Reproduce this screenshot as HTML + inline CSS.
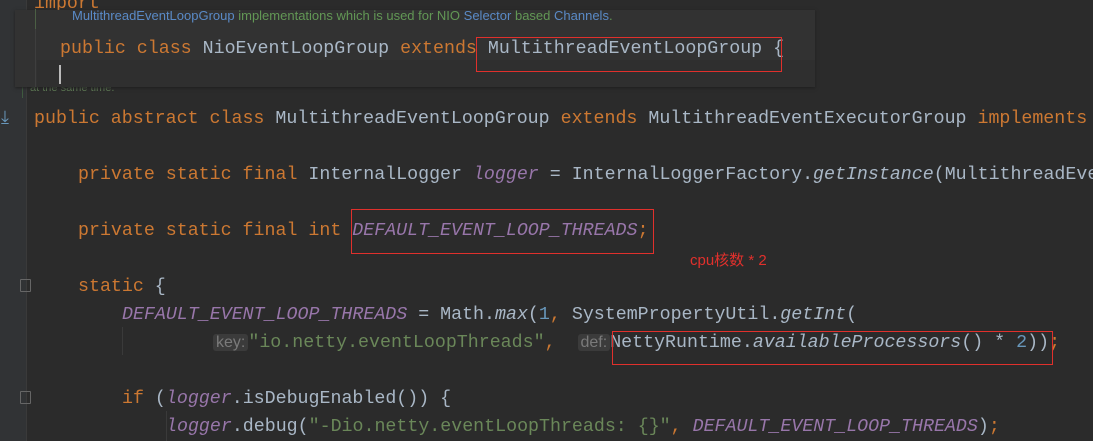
<!DOCTYPE html>
<html><head><meta charset="utf-8"><style>
body{margin:0;width:1093px;height:441px;background:#2b2b2b;overflow:hidden;position:relative;font-family:"Liberation Mono",monospace;}
.gut{position:absolute;left:0;top:0;width:26px;height:441px;background:#313335;border-right:1px solid #3a3a3a}
.l{position:absolute;font-size:18.3px;line-height:28px;white-space:pre;color:#a9b7c6}
.k{color:#cc7832}.f{color:#9876aa;font-style:italic}.i{font-style:italic}.s{color:#6a8759}.n{color:#6897bb}
.h{background:#3b3b3b;color:#7a7a7a;font-family:"Liberation Sans",sans-serif;font-size:16px;padding:0 3px;border-radius:3px}
.box{position:absolute;border:1px solid #e0302c}
.pop{position:absolute;left:15px;top:10px;width:800px;height:77px;background:#323232;box-shadow:0 1px 3px #1f1f1f}
.ig{position:absolute;width:1px;background:#3a3a3a}
</style></head><body>
<div class="gut"></div>
<div style="position:absolute;left:1px;top:107px;color:#6897bb;font-size:18px;font-family:'DejaVu Sans',sans-serif">⤓</div>
<div class="l k" style="left:34px;top:-10px">import</div>
<div style="position:absolute;left:30px;top:82px;font-family:'Liberation Sans',sans-serif;font-size:11px;color:#5f7a55">at the same time.</div>
<div class="ig" style="left:22px;top:80px;height:18px;background:#3f5a3f"></div>
<div class="l" style="left:34px;top:105px"><span class="k">public abstract class </span>MultithreadEventLoopGroup <span class="k">extends </span>MultithreadEventExecutorGroup <span class="k">implements</span></div>
<div class="l" style="left:78px;top:161px"><span class="k">private static final </span>InternalLogger <span class="f">logger</span> = InternalLoggerFactory.<span class="i">getInstance</span>(MultithreadEve</div>
<div class="l" style="left:78px;top:217px"><span class="k">private static final int </span><span class="f">DEFAULT_EVENT_LOOP_THREADS</span><span class="k">;</span></div>
<div class="l" style="left:78px;top:273px"><span class="k">static </span>{</div>
<div class="l" style="left:122px;top:301px"><span class="f">DEFAULT_EVENT_LOOP_THREADS</span> = Math.<span class="i">max</span>(<span class="n">1</span><span class="k">, </span>SystemPropertyUtil.<span class="i">getInt</span>(</div>
<div class="l" style="left:213px;top:329px"><span class="h">key:</span><span class="s">"io.netty.eventLoopThreads"</span><span class="k">, </span> <span class="h">def:</span>NettyRuntime.<span class="i">availableProcessors</span>() * <span class="n">2</span>))<span class="k">;</span></div>
<div class="l" style="left:122px;top:385px"><span class="k">if </span>(<span class="f">logger</span>.isDebugEnabled()) {</div>
<div class="l" style="left:166px;top:413px"><span class="f">logger</span>.debug(<span class="s">"-Dio.netty.eventLoopThreads: {}"</span><span class="k">, </span><span class="f">DEFAULT_EVENT_LOOP_THREADS</span>)<span class="k">;</span></div>
<div class="ig" style="left:122px;top:327px;height:28px"></div>
<div class="ig" style="left:166px;top:411px;height:30px"></div>
<div style="position:absolute;left:20px;top:279px;width:9px;height:11px;border:1px solid #666;border-radius:1px"></div>
<div style="position:absolute;left:20px;top:391px;width:9px;height:11px;border:1px solid #666;border-radius:1px"></div>
<div class="pop">
 <div style="position:absolute;left:20px;top:0;width:1px;height:77px;background:#3e3e3e"></div>
 <div style="position:absolute;left:22px;top:50px;width:778px;height:27px;background:#2f2f2f"></div>
 <div style="position:absolute;left:20px;top:-1px;width:1px;height:20px;background:#4b5f44"></div>
 <div style="position:absolute;left:57px;top:-2px;font-family:'Liberation Sans',sans-serif;font-size:13px;color:#629755;white-space:pre"><span style="color:#5a8ac6">MultithreadEventLoopGroup</span> implementations which is used for NIO <span style="color:#5a8ac6">Selector</span> based <span style="color:#5a8ac6">Channels</span>.</div>
 <div class="l" style="left:45px;top:25px"><span class="k">public class </span>NioEventLoopGroup <span class="k">extends </span>MultithreadEventLoopGroup {</div>
 <div style="position:absolute;left:44px;top:55px;width:2px;height:19px;background:#bbb"></div>
</div>
<div class="box" style="left:476px;top:37px;width:304px;height:33px"></div>
<div class="box" style="left:351px;top:209px;width:301px;height:43px"></div>
<div class="box" style="left:612px;top:331px;width:439px;height:32px"></div>
<div style="position:absolute;left:690px;top:249px;color:#e0302c;font-family:'Liberation Sans','Noto Sans CJK SC',sans-serif;font-size:15px">cpu核数 * 2</div>
</body></html>
